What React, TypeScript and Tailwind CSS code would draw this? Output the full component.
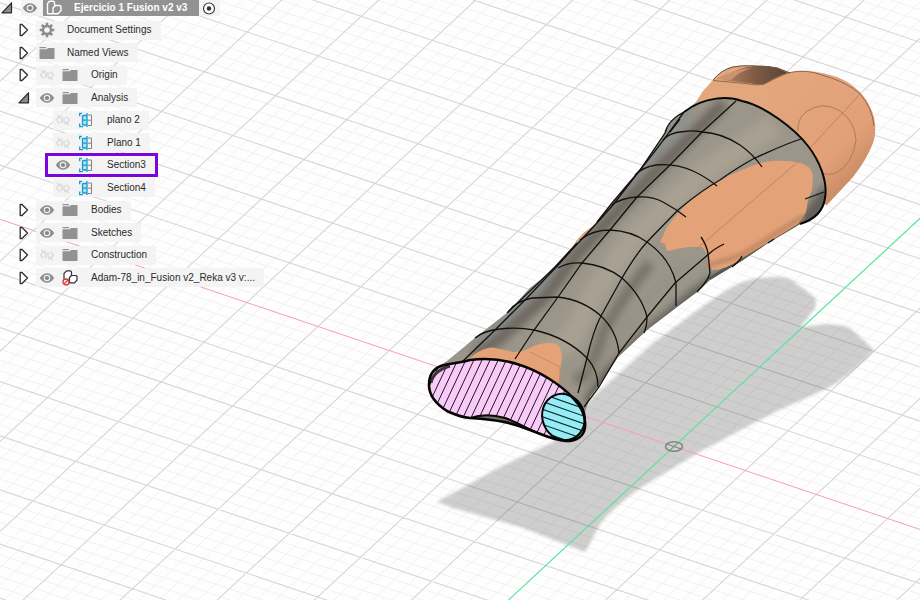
import React from "react";

type IconKind = "gear" | "folder" | "section" | "linked";

type Row = {
  label: string;
  icon: IconKind;
  level: 0 | 1 | 2;
  toggle?: "open" | "closed";
  eye?: "on" | "off";
  selected?: boolean;
};

const rows: Row[] = [
  { label: "Document Settings", icon: "gear", level: 0, toggle: "closed" },
  { label: "Named Views", icon: "folder", level: 0, toggle: "closed" },
  { label: "Origin", icon: "folder", level: 1, toggle: "closed", eye: "off" },
  { label: "Analysis", icon: "folder", level: 1, toggle: "open", eye: "on" },
  { label: "plano 2", icon: "section", level: 2, eye: "off" },
  { label: "Plano 1", icon: "section", level: 2, eye: "off" },
  { label: "Section3", icon: "section", level: 2, eye: "on", selected: true },
  { label: "Section4", icon: "section", level: 2, eye: "off" },
  { label: "Bodies", icon: "folder", level: 1, toggle: "closed", eye: "on" },
  { label: "Sketches", icon: "folder", level: 1, toggle: "closed", eye: "on" },
  { label: "Construction", icon: "folder", level: 1, toggle: "closed", eye: "off" },
  { label: "Adam-78_in_Fusion v2_Reka v3 v:...", icon: "linked", level: 1, toggle: "closed", eye: "on" },
];

function Eye({ off = false }: { off?: boolean }) {
  if (off) {
    return (
      <svg width="16" height="14" viewBox="0 0 16 14" fill="none" stroke="#dadada" strokeWidth="1.4">
        <path d="M1.5 7C3 4.6 5.2 3.2 7 3.1M14.5 7c-1.4 2.4-3.6 3.7-5.6 3.9M1.5 7c1 1.7 2.200 2.700 3.500 3.300M11 3.800c1.500.7 2.700 1.700 3.500 3.200M2.500 2l11 10M6 7.500c.3 1 1 1.600 2 1.800M10 6.500C9.700 5.500 9 5 8 4.800" />
      </svg>
    );
  }
  return (
    <svg width="16" height="14" viewBox="0 0 16 14">
      <path d="M.8 7C4.200.6 11.800.6 15.200 7C11.800 13.400 4.200 13.400.8 7Z" fill="#8f8f8f" />
      <circle cx="8" cy="7" r="3.300" fill="#eeeeee" />
      <circle cx="8" cy="7" r="2.100" fill="#858585" />
    </svg>
  );
}

function Toggle({ open = false }: { open?: boolean }) {
  return (
    <svg width="12" height="14" viewBox="0 0 12 14">
      {open ? (
        <path d="M10.500 1.800V11.800H1Z" fill="#8b8b8b" stroke="#262626" strokeWidth="1.200" strokeLinejoin="round" />
      ) : (
        <path d="M2.200 1.500H4L9.500 7L4 12.500H2.200Z" fill="#fff" stroke="#2d2d2d" strokeWidth="1.300" strokeLinejoin="round" />
      )}
    </svg>
  );
}

function RowIcon({ kind }: { kind: IconKind }) {
  switch (kind) {
    case "gear":
      return (
        <svg width="16" height="16" viewBox="0 0 16 16" fill="none" stroke="#8c8c8c">
          <circle cx="8" cy="8" r="4" strokeWidth="2.400" />
          <path strokeWidth="2.600" d="M8 .7v3M8 12.300v3M.7 8h3M12.300 8h3M2.800 2.800l2.100 2.100M11.100 11.100l2.100 2.100M2.800 13.200l2.100-2.100M11.100 4.900l2.100-2.100" />
        </svg>
      );
    case "folder":
      return (
        <svg width="16" height="14" viewBox="0 0 16 14" fill="#929292">
          <path d="M.5 1h6.500v1.300H.5zM.5 3.300h7L9.200 2h6.300v11H.5z" />
        </svg>
      );
    case "section":
      return (
        <svg width="16" height="16" viewBox="0 0 16 16" fill="none">
          <path d="M4.500 3.500h4v9.500h-4z" fill="#a5e4fa" />
          <path d="M4 1.300H1.700v3M1.700 11.500v3.200H5M9 1v14M4.500 3.500v9.500M4.500 3.500H9M4.500 8.200H9M4.500 13H9" stroke="#1799cf" strokeWidth="1.300" />
          <path d="M10 3h3.500v10.500H10M10 8.200h3.500" stroke="#858585" strokeWidth="1" />
        </svg>
      );
    case "linked":
      return (
        <svg width="16" height="16" viewBox="0 0 16 16" fill="#fff" stroke="#333" strokeWidth="1.200">
          <path d="M2 9V3.500L4.500.9H8.500L9.500 2V6L7.500 8V11H4Z" strokeLinejoin="round" />
          <path d="M7.500 7.500L9.500 5.500H14L15 6.500V10L12.500 12.800H7.500Z" strokeLinejoin="round" />
          <circle cx="4" cy="12" r="3" fill="#fff" stroke="#d9333c" strokeWidth="1.300" />
          <path d="M2 14l4-4" stroke="#d9333c" strokeWidth="1.300" />
        </svg>
      );
  }
}

function TreeRow({ row }: { row: Row }) {
  const nested = row.level === 2;
  return (
    <li className="flex items-center">
      <span className={nested ? "w-[45px] shrink-0" : "w-[36px] shrink-0 pl-[18px]"}>
        {row.toggle && (
          <button type="button" aria-label={`Toggle ${row.label}`} className="block">
            <Toggle open={row.toggle === "open"} />
          </button>
        )}
      </span>
      <div
        className={
          row.selected
            ? "flex h-6 items-center border-[3px] border-[#7b05dc] bg-[#f3f3f3] pr-[9px] pl-[7px]"
            : nested
              ? "ml-[8px] flex h-[19px] items-center bg-[#f3f3f3]/90 pr-[9px] pl-[2px]"
              : "flex h-[19px] items-center bg-[#f3f3f3]/90 pr-[9px] pl-[3px]"
        }
      >
        {row.eye && (
          <button type="button" aria-label={`Visibility of ${row.label}`} className="mr-[7px] block">
            <Eye off={row.eye === "off"} />
          </button>
        )}
        <span className={row.level === 0 ? "mr-3" : "mr-[13px]"}>
          <RowIcon kind={row.icon} />
        </span>
        <button type="button" className="text-[10px] leading-4 whitespace-nowrap text-[#2b2b2b]">
          {row.label}
        </button>
      </div>
    </li>
  );
}

function Browser() {
  return (
    <nav aria-label="Browser" className="relative w-fit">
      <div className="flex h-4 items-center">
        <button type="button" aria-label="Toggle browser" className="ml-px block w-5">
          <Toggle open />
        </button>
        <div className="flex h-4 items-center bg-[#f3f3f3]/90 pr-1">
          <button type="button" aria-label="Visibility of document" className="mr-[5px] ml-px block">
            <Eye />
          </button>
          <button
            type="button"
            className="flex h-4 items-center bg-[#929292] pr-3 pl-[3px] text-[10px] leading-4 font-bold whitespace-nowrap text-white"
          >
            <svg width="16" height="16" viewBox="0 0 16 16" fill="none" stroke="#fff" strokeWidth="1.400" strokeLinejoin="round" className="mr-3">
              <path d="M7 13.800H1.500V3.500L3.500 1.200H7.500L8.500 2.300V5.500M7 13.800V8L9.500 5.500H14L15 6.500V10.500L12 13.800Z" />
            </svg>
            Ejercicio 1 Fusion v2 v3
          </button>
          <label className="ml-[3px] block">
            <input type="radio" name="active-component" defaultChecked aria-label="Activate component" className="sr-only" />
            <svg width="14" height="16" viewBox="0 0 14 16">
              <circle cx="7" cy="8.500" r="5.500" fill="#fff" stroke="#3b3b3b" strokeWidth="1.200" />
              <circle cx="7" cy="8.500" r="2.200" fill="#333" />
            </svg>
          </label>
        </div>
      </div>
      <ul className="mt-[3px] grid h-[270px] auto-rows-fr">
        {rows.map((row) => (
          <TreeRow key={row.label} row={row} />
        ))}
      </ul>
    </nav>
  );
}

// Ground-plane axes: U runs along red, V along green.
const O = [674, 446.5];
const U = [71.2, 24];
const V = [42.8, -39.7];
const N = 14;

function lines(major: boolean) {
  let d = "";
  for (let i = -N * 5; i <= N * 5; i++) {
    if ((i % 5 === 0) !== major || i === 0) continue;
    const k = i / 5;
    const ax = O[0] + U[0] * k, ay = O[1] + U[1] * k;
    const bx = O[0] + V[0] * k, by = O[1] + V[1] * k;
    d += `M${ax - V[0] * 22} ${ay - V[1] * 22}L${ax + V[0] * 22} ${ay + V[1] * 22}`;
    d += `M${bx - U[0] * N} ${by - U[1] * N}L${bx + U[0] * N} ${by + U[1] * N}`;
  }
  return d;
}

const minor = lines(false);
const major = lines(true);

const CUFF =
  "M695 103C707 99 722 97 733 99C750 101 770 110 785 122C803 136 817 157 823 175C827 190 827 203 817 214Q810 221 800 224L768 243L743 260L710 280L697 292L677 307L647 330L633 343L618 357L603 380L590 397L585 412L560 400L520 364L493 359L437 367L447 361L475 338L507 313L530 288L547 275L567 253L577 243L597 222L612 203L640 170L665 133Q668 120 684 112Z";
const SECTION =
  "M429 385C429 375 433 369 441 366C450 363 460 363 470 360C486 358 503 359 520 365C539 371 560 384 573 398C583 408 586 417 585 427C584 436 577 441 566 441C553 440 541 434 530 430C513 423 500 420 470 418C460 417 454 414 447 411C436 404 429 396 429 385Z";
const PATCH =
  "M660 242L667 227C675 216 684 206 693 198C708 185 735 172 757 164C770 160 786 160 800 163Q812 166 813 176L812 190L808 200L806 212L798 224L767 243L742 258C730 267 720 270 712 270L708 255L702 247L688 247L667 251L665 244Z";

const LONG_1 = "M684 112C668 134 656 151 640 170L613 205C594 227 576 245 560 263L527 298L492 333L463 361";
const LONG_2 = "M736 101L702 132L670 165L637 197L610 230L582 263L558 297L534 330L515 359";
const LONG_3 = "M801 139C782 145 767 153 753 159C737 168 728 174 720 180C702 190 690 200 678 210L647 242C636 254 628 268 622 278L601 316C594 329 590 345 587 358L578 393";
const LONG_4 = "M724 244Q714 249 710 253L675 283L647 317L619 353L599 387L584 407";

function Scene() {
  return (
    <svg
      role="img"
      aria-label="Leg model with section analysis"
      className="absolute inset-0 h-full w-full"
      viewBox="0 0 920 600"
      preserveAspectRatio="xMinYMin slice"
      fill="none"
    >
      <defs>
        <filter id="soft" x="-10%" y="-10%" width="120%" height="120%">
          <feGaussianBlur stdDeviation="4" />
        </filter>
        <filter id="edge" x="-5%" y="-5%" width="110%" height="110%">
          <feGaussianBlur stdDeviation="1.500" />
        </filter>
        <clipPath id="cuff"><path d={CUFF} /></clipPath>
        <clipPath id="section"><path d={SECTION} /></clipPath>
        <clipPath id="bone"><ellipse cx="563.500" cy="417" rx="21" ry="23.500" transform="rotate(-22 563.500 417)" /></clipPath>
        <linearGradient id="skin" gradientUnits="userSpaceOnUse" x1="750" y1="90" x2="850" y2="190">
          <stop offset="0" stopColor="#e3a77e" />
          <stop offset="0.750" stopColor="#e2a078" />
          <stop offset="1" stopColor="#c58962" />
        </linearGradient>
        <linearGradient id="hollow" x1="0" y1="0" x2="1" y2="0">
          <stop offset="0" stopColor="#b8825f" />
          <stop offset="0.500" stopColor="#7d5b45" />
          <stop offset="1" stopColor="#574336" />
        </linearGradient>
      </defs>

      <path d={minor} stroke="#f1f1f1" />
      <path d={major} stroke="#d6d6d6" strokeWidth="1.100" />
      <path
        d="M437 502L500 467L553 442L593 397L653 343L680 323C700 308 725 290 740 283C755 277 780 275 790 279L812 295Q818 300 815 308L800 328C815 324 838 323 850 328L874 350C860 365 845 378 830 387L773 413L703 450L653 480Q630 494 613 510Q600 522 597 530L585 552L520 527L453 508Z"
        fill="#000"
        fillOpacity="0.190"
        filter="url(#edge)"
      />
      <path d={`M${O[0] - U[0] * N} ${O[1] - U[1] * N}L${O[0] + U[0] * 6} ${O[1] + U[1] * 6}`} stroke="#f3a0b3" />
      <path d={`M${O[0] - V[0] * 6} ${O[1] - V[1] * 6}L${O[0] + V[0] * 8} ${O[1] + V[1] * 8}`} stroke="#5be39a" strokeWidth="1.200" />
      <ellipse cx="674" cy="446.500" rx="8.500" ry="4.800" stroke="#7f857f" strokeWidth="1.600" />
      <path d="M667 444L681 449M670 450L678 443" stroke="#7f857f" />

      {/* foot */}
      <path
        d="M694 105L703 91L713 80Q720 71 730 67Q742 64 758 66L777 67L790 72.500Q798 70 807 71Q822 72 837 77Q850 82 860 92Q870 103 874 117Q877 133 873 143Q867 159 853 177L827 205L780 190Z"
        fill="url(#skin)"
      />
      <path d="M723 80Q732 70 747 67Q765 64 777 68L788 73Q774 79 763 85Z" fill="url(#hollow)" />
      <path d="M716 79Q734 69 752 68Q740 71 731 80Z" fill="#c9936c" />
      <path d="M713 80.500L740 83L758 85Q765 85 773 79Q782 74 790 72.500Q806 69 822 75Q847 82 860 94Q872 107 874 126" stroke="#93684c" />
      <path d="M713 80Q721 70 733 67Q748 64 777 68L790 73" stroke="#6e5443" />
      <path d="M798 131Q797 119 806 112Q822 100 840 111Q855 121 856 140Q853 164 836 173Q828 176 822 173" stroke="#b17b57" />
      <path d="M860 94L799 160L707 240" stroke="#b98361" strokeWidth="0.900" />
      <path d="M606 221Q590 224 577 240L561 264L580 248L600 229Z" fill="#dc9e77" />
      <path d="M594 226L573 248" stroke="#ad765a" />

      {/* cuff body and its long highlights */}
      <path d={CUFF} fill="#9c968a" />
      <g clipPath="url(#cuff)">
        <g filter="url(#soft)">
          <path d="M690 105L612 208L550 275L470 345" stroke="#8f918c" strokeWidth="20" />
          <path d="M724 103L664 163L624 204L572 260L546 296L500 338L475 356" stroke="#6b645b" strokeWidth="12" />
          <path d="M775 125L700 175L634 237L596 290L570 340L545 352" stroke="#a8a192" strokeWidth="22" />
          <path d="M650 263L625 296L604 330L588 375L574 380" stroke="#746e65" strokeWidth="10" />
          <path d="M690 262L646 300L612 345L592 380" stroke="#979085" strokeWidth="9" />
          <path d="M830 190L800 230L700 293L652 333L610 375L590 405" stroke="#5e5d56" strokeWidth="16" />
        </g>
        <path d="M800 224L768 243L743 260L710 280" stroke="#555850" strokeWidth="6" />
        <path d={PATCH} fill="#e3a278" />
        <path d="M706 266L742 255L804 216" stroke="#bd8561" strokeWidth="6" filter="url(#edge)" opacity="0.700" />
        <path d="M800 160L707 240L696 249" stroke="#b98361" strokeWidth="0.900" />
        <path d="M466 362Q474 354 480 351Q491 345 499 349L513 352Q523 352 530 348Q543 341 557 344Q562 350 562 357L558 386L515 370Z" fill="#e5a276" />
        <path d="M530 352L560 367M560 367V385" stroke="#bf8a66" strokeWidth="0.900" />
      </g>

      <g stroke="#12110f" strokeWidth="1.300">
        <path d={LONG_1} />
        <path d={LONG_2} />
        <path d={LONG_3} />
        <path d={LONG_4} />
        <path d="M663 140Q668 133 684 131.500Q693 130 702 132Q722 133 740 145Q753 154 762 167" />
        <path d="M635 175Q643 167 656 165Q675 163 693 171Q706 177 717 186" />
        <path d="M612 205Q621 198 637 197Q652 196 663 202Q676 209 686 217" />
        <path d="M580 240Q592 230 610 230Q632 231 647 242Q670 258 676 283L676 306" />
        <path d="M558 268Q568 262 582 263Q605 265 622 278Q642 296 647 317Q647 326 644 333" />
        <path d="M508 312Q516 301 532 298L558 297Q583 300 601 316Q617 331 619 353" />
        <path d="M475 338Q483 331 500 329Q518 327 534 330Q566 337 587 358Q598 370 598 387" />
        <path d="M701 237Q706 244 708 253L710 273Q708 281 697 292" />
        <path d="M805 199L824 192M732 267Q740 261 742 256M768 243L774 239" />
        <path d="M684 112Q668 120 665 133L640 170L612 203L597 222M577 243L555 267L507 313M680 119L670 132" />
      </g>
      <path d="M684 112C705 96 729 96 742 101C765 106 795 129 808 146C819 160 828 181 825 198C823 213 813 220 800 224" stroke="#080808" strokeWidth="2" />

      {/* cut face */}
      <path d={SECTION} fill="#f8ccf7" />
      <g clipPath="url(#section)">
        <path
          d={Array.from({ length: 25 }, (_, i) => `M${430 + i * 8.1} 350L${383 + i * 8.1} 450`).join("")}
          stroke="#211525"
          strokeWidth="1"
        />
        <path d="M470 418C482 414 495 415 505 418C520 423 530 431 552 439L520 445Z" fill="#77716a" stroke="#090909" strokeWidth="2" />
      </g>
      <path d="M431 383Q433 371 450 366" stroke="#3b3536" strokeWidth="3" />
      <ellipse cx="563.500" cy="417" rx="21" ry="23.500" transform="rotate(-22 563.500 417)" fill="#97edf5" />
      <g clipPath="url(#bone)">
        <path
          d={Array.from({ length: 11 }, (_, i) => `M535 ${361 + i * 7.6}L595 ${382 + i * 7.6}`).join("")}
          stroke="#102c30"
          strokeWidth="1.100"
        />
      </g>
      <ellipse cx="563.500" cy="417" rx="21" ry="23.500" transform="rotate(-22 563.500 417)" stroke="#050505" strokeWidth="2" />
      <path d={SECTION} stroke="#050505" strokeWidth="2.600" />
    </svg>
  );
}

export default function App() {
  return (
    <main className="relative min-h-screen overflow-hidden bg-[#fefefe] font-['Liberation_Sans',Arial,sans-serif]">
      <Scene />
      <Browser />
    </main>
  );
}
